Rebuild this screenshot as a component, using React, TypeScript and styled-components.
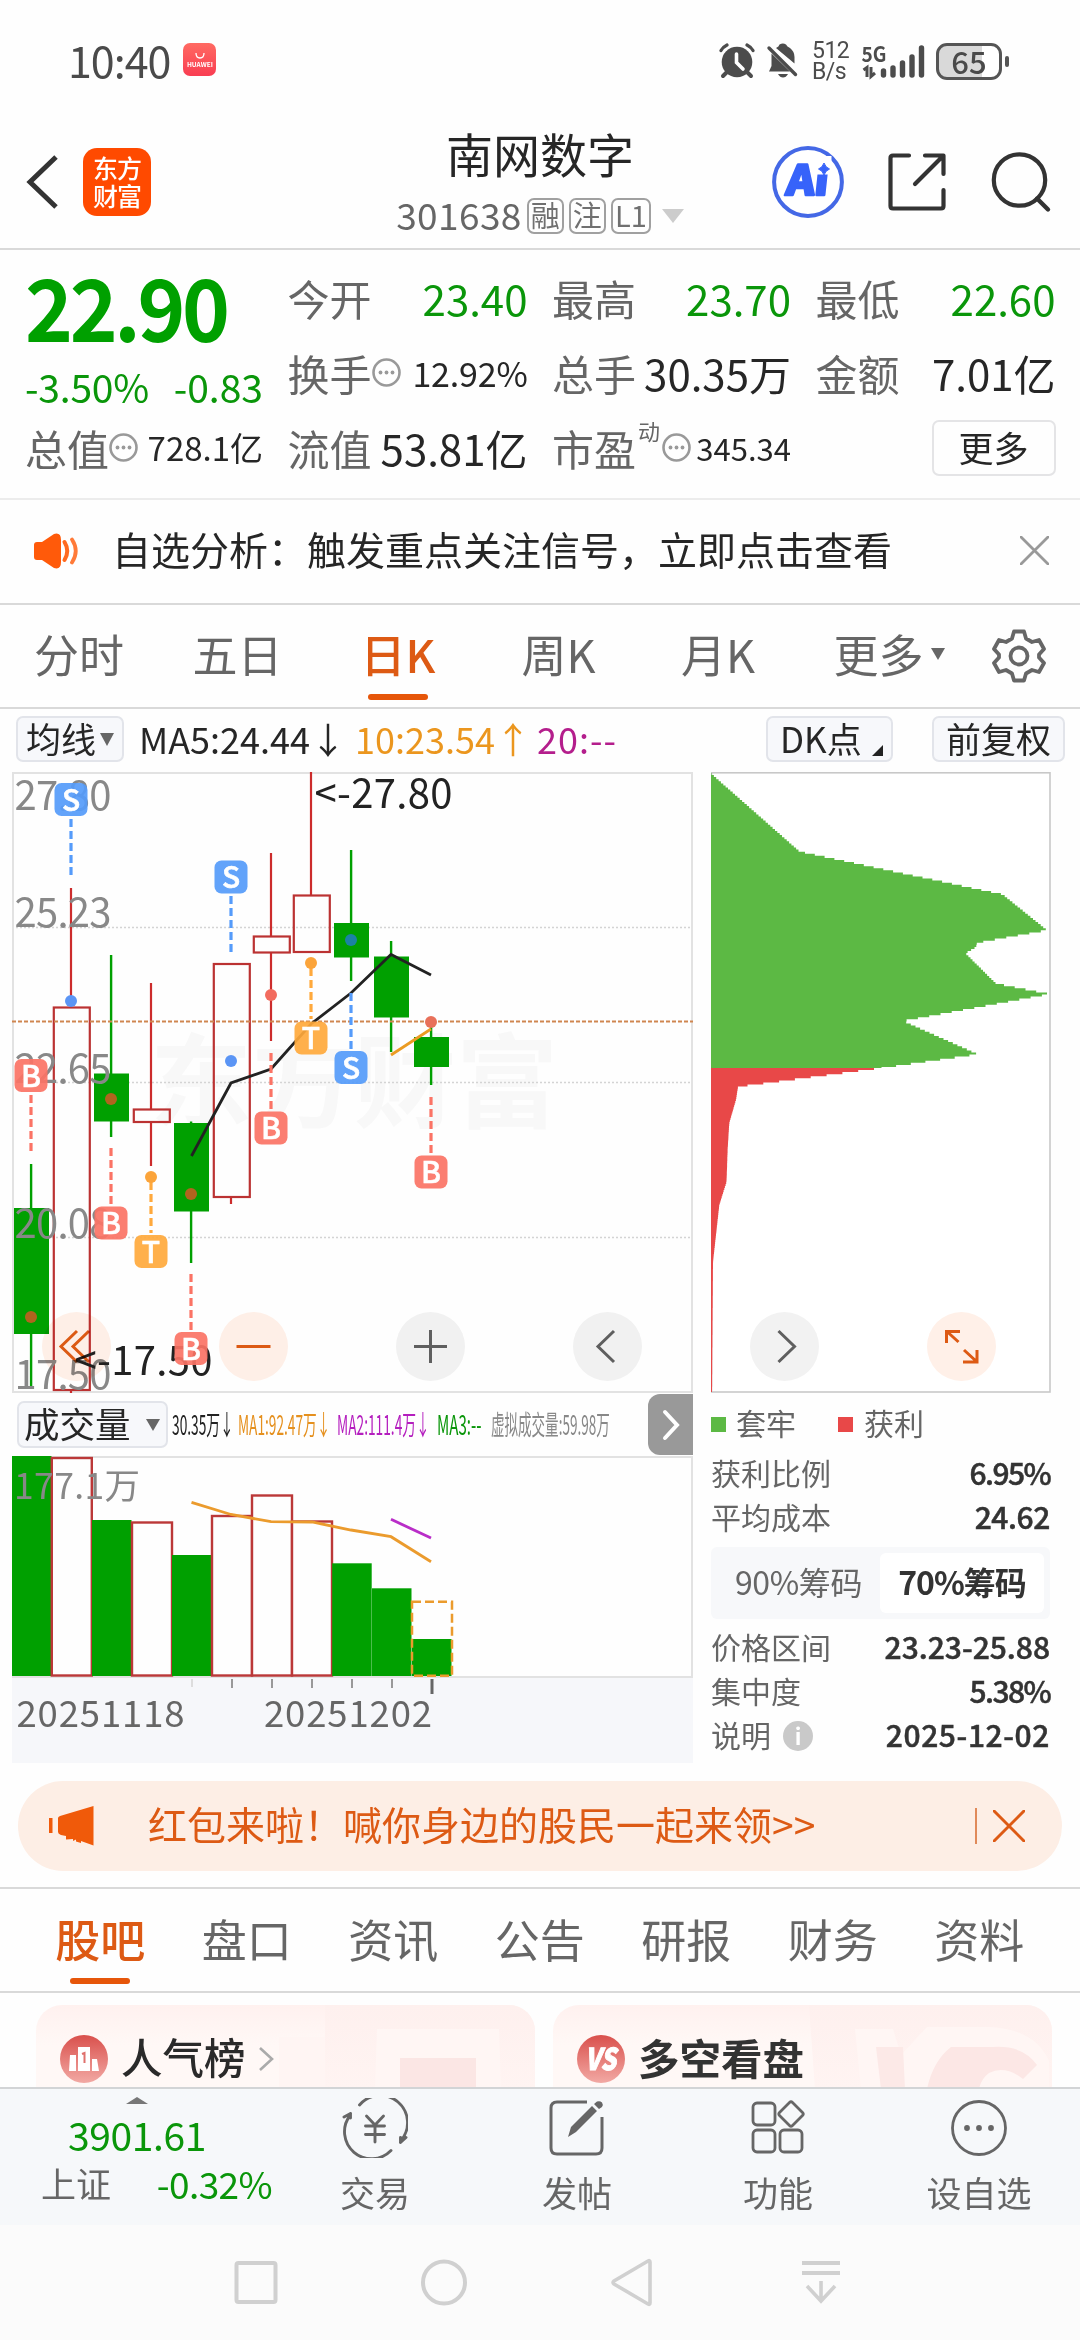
import React from "react";
import styled, { createGlobalStyle } from "styled-components";

const GREEN = "#0a960a";
const ORANGE = "#dd5a14";
const GRAY = "#666666";
const INK = "#262626";
const LINE = "#d9d9d9";
const FONT = `"Noto Sans CJK SC", "Noto Sans", sans-serif`;

const GlobalStyle = createGlobalStyle`
  * { box-sizing: border-box; }
  body { margin: 0; background: #fff; font-family: ${FONT}; }
  svg { display: block; flex: none; }
  svg text { font-family: ${FONT}; }
`;

const Screen = styled.div`
  width: 1080px;
  height: 2340px;
  overflow: hidden;
  display: flex;
  flex-direction: column;
  background: #fefefe;
  color: ${INK};
`;

const Txt = styled.span<{ s: number; c?: string; b?: number; ls?: number; ml?: number; pb?: number }>`
  font-size: ${(p) => p.s}px;
  line-height: 1;
  color: ${(p) => p.c ?? INK};
  font-weight: ${(p) => p.b ?? 400};
  letter-spacing: ${(p) => p.ls ?? 0}px;
  margin-left: ${(p) => p.ml ?? 0}px;
  padding-bottom: ${(p) => p.pb ?? 0}px;
  white-space: nowrap;
`;

/* ---------- status bar ---------- */
const StatusBar = styled.div`
  height: 118px;
  padding: 0 71px 0 68px;
  display: flex;
  align-items: center;
  justify-content: space-between;
`;
const Group = styled.div<{ gap?: number; pt?: number }>`
  display: flex;
  align-items: center;
  gap: ${(p) => p.gap ?? 0}px;
  padding-top: ${(p) => p.pt ?? 0}px;
`;
const StoreBadge = styled.div`
  width: 33px;
  height: 33px;
  border-radius: 7px;
  margin-left: 13px;
  background: linear-gradient(#ff6a62, #f93d52);
  display: flex;
  flex-direction: column;
  align-items: center;
  justify-content: center;
  color: #fff;
  font-size: 6.5px;
  font-weight: 700;
  line-height: 8px;
`;
const NetSpeed = styled.div`
  font-family: Roboto, sans-serif;
  font-size: 23px;
  line-height: 21px;
  color: #4c4c4c;
  width: 36px;
  white-space: nowrap;
  letter-spacing: -0.5px;
`;
const Battery = styled.div`
  width: 66px;
  height: 37px;
  border: 3px solid #555;
  border-radius: 11px;
  background: linear-gradient(90deg, #d9d9d9 43px, #fff 43px);
  display: flex;
  align-items: center;
  justify-content: center;
  padding-bottom: 2px;
`;
const BatteryTip = styled.div`
  width: 4px;
  height: 11px;
  margin-left: 3px;
  border-radius: 2px;
  background: #555;
`;

/* ---------- header ---------- */
const Header = styled.div`
  height: 132px;
  border-bottom: 2px solid ${LINE};
  display: grid;
  grid-template-columns: 340px 400px 340px;
`;
const HeadLeft = styled.div`
  display: flex;
  align-items: center;
  padding: 0 0 2px 25px;
  gap: 23px;
`;
const Logo = styled.div`
  width: 68px;
  height: 68px;
  border-radius: 14px;
  background: #ff4a00;
  color: #fff;
  display: flex;
  flex-direction: column;
  align-items: center;
  justify-content: center;
  font-size: 25px;
  line-height: 28px;
  font-weight: 500;
  letter-spacing: -1px;
  padding-bottom: 3px;
`;
const HeadMid = styled.div`
  display: flex;
  flex-direction: column;
  align-items: center;
  padding-top: 11px;
`;
const CodeRow = styled.div`
  display: flex;
  align-items: center;
  gap: 5px;
  margin-top: 20px;
`;
const Tag = styled.span<{ w: number }>`
  width: ${(p) => p.w}px;
  height: 36px;
  border: 2px solid #a0a0a0;
  border-radius: 7px;
  display: flex;
  align-items: center;
  justify-content: center;
  font-size: 29px;
  line-height: 1;
  color: #707070;
  padding-bottom: 3px;
`;
const HeadRight = styled.div`
  display: flex;
  align-items: center;
  padding: 0 0 3px 32px;
`;

/* ---------- quote ---------- */
const Quote = styled.div`
  height: 250px;
  border-bottom: 2px solid #ececec;
  padding: 10px 24px 0 25px;
  display: grid;
  grid-template-columns: 238px 240px 239px 240px;
  grid-template-rows: 75px 75px 75px;
  column-gap: 24.5px;
`;
const PriceBlock = styled.div`
  grid-row: span 2;
  display: flex;
  flex-direction: column;
`;
const BigPrice = styled.div`
  font-size: 86px;
  line-height: 1;
  font-weight: 700;
  letter-spacing: -3.5px;
  color: #00a000;
  margin-top: 2px;
  transform: scaleX(0.945);
  transform-origin: 0 50%;
`;
const ChangeRow = styled.div`
  display: flex;
  justify-content: space-between;
  margin-top: 19px;
`;
const Cell = styled.div<{ end?: boolean }>`
  display: flex;
  align-items: center;
  justify-content: ${(p) => (p.end ? "flex-end" : "space-between")};
  min-width: 0;
`;
const Sup = styled.sup`
  font-size: 22px;
  line-height: 1;
  color: ${GRAY};
  align-self: flex-start;
  margin: -8px 2px 0 2px;
`;
const MoreButton = styled.div`
  width: 124px;
  height: 56px;
  border: 2px solid #e4e4e6;
  border-radius: 7px;
  display: flex;
  align-items: center;
  justify-content: center;
  padding-bottom: 3px;
`;

/* ---------- notice ---------- */
const Notice = styled.div`
  height: 105px;
  border-bottom: 2px solid ${LINE};
  padding: 0 31px 2px 33px;
  display: grid;
  grid-template-columns: 79px 1fr 29px;
  align-items: center;
`;

/* ---------- tabs ---------- */
const PeriodTabs = styled.div`
  height: 104px;
  border-bottom: 2px solid ${LINE};
  display: grid;
  grid-template-columns: 158px 159px 162px 159px 160px 160px 122px;
`;
const Tab = styled.div<{ pt: number }>`
  display: flex;
  flex-direction: column;
  align-items: center;
  padding-top: ${(p) => p.pt}px;
`;
const Underline = styled.div<{ mt: number }>`
  width: 60px;
  height: 6px;
  border-radius: 3px;
  background: #e6560a;
  margin-top: ${(p) => p.mt}px;
`;
const Down = styled.i<{ w: number; h: number; c: string; ml?: number; mt?: number }>`
  width: 0;
  height: 0;
  border-left: ${(p) => p.w / 2}px solid transparent;
  border-right: ${(p) => p.w / 2}px solid transparent;
  border-top: ${(p) => p.h}px solid ${(p) => p.c};
  margin-left: ${(p) => p.ml ?? 0}px;
  margin-top: ${(p) => p.mt ?? 0}px;
`;
const Up = styled.i`
  width: 0;
  height: 0;
  border-left: 11px solid transparent;
  border-right: 11px solid transparent;
  border-bottom: 7px solid #777;
`;

/* ---------- chart ---------- */
const MaBar = styled.div`
  height: 63px;
  padding: 0 16px 3px;
  display: grid;
  grid-template-columns: 123px 216px 182px 229px 126px 40px 132px;
  align-items: center;
`;
const Chip = styled.div<{ w: number; h?: number }>`
  width: ${(p) => p.w}px;
  height: ${(p) => p.h ?? 46}px;
  background: #f7f8fb;
  border: 2px solid #e2e4ea;
  border-radius: 7px;
  display: flex;
  align-items: center;
  padding: 0 0 4px 8px;
`;
const Corner = styled.i`
  width: 0;
  height: 0;
  border-left: 11px solid transparent;
  border-bottom: 11px solid #222;
  margin: 27px 0 0 10px;
`;
const ChartArea = styled.div`
  position: relative;
  height: 993px;
  padding-left: 12px;
  display: grid;
  grid-template-columns: 681px 339px;
  column-gap: 18px;
`;
const Column = styled.div`
  display: flex;
  flex-direction: column;
`;
const Floating = styled.div`
  position: absolute;
  left: 42px;
  top: 540px;
  display: flex;
  gap: 108px;
  mix-blend-mode: multiply;
`;
const Round = styled.div<{ warm?: boolean }>`
  width: 69px;
  height: 69px;
  border-radius: 50%;
  background: ${(p) => (p.warm ? "#fff0e8" : "#f2f2f2")};
  display: flex;
  align-items: center;
  justify-content: center;
`;
const VolHeader = styled.div`
  height: 63px;
  display: flex;
  align-items: center;
  padding-left: 5px;
`;
const NarrowBox = styled.div<{ w: number }>`
  width: ${(p) => p.w}px;
  flex: none;
  padding-bottom: 3px;
`;
const Narrow = styled.span<{ c: string; k: number }>`
  display: inline-block;
  font-size: 27.5px;
  line-height: 32px;
  white-space: nowrap;
  color: ${(p) => p.c};
  transform: scaleX(${(p) => p.k});
  transform-origin: 0 50%;
`;
const Expand = styled.div`
  width: 45px;
  height: 61px;
  margin-left: auto;
  background: #999;
  border-radius: 12px 0 0 12px;
  display: flex;
  align-items: center;
  justify-content: center;
`;
const Axis = styled.div`
  height: 85px;
  background: #f6f7fa;
`;
const Legend = styled.div`
  display: grid;
  grid-template-columns: 25px 102px 26px 1fr;
  align-items: center;
  height: 57px;
`;
const Swatch = styled.i<{ c: string }>`
  width: 15px;
  height: 15px;
  margin-top: 5px;
  background: ${(p) => p.c};
`;
const StatRow = styled.div`
  height: 44px;
  display: flex;
  align-items: center;
  justify-content: space-between;
`;
const StatValue = styled.span<{ ls?: number }>`
  font-size: 30px;
  line-height: 1;
  font-weight: 500;
  color: #333;
  -webkit-text-stroke: 0.5px #333;
  letter-spacing: ${(p) => p.ls ?? 0}px;
`;
const Toggle = styled.div`
  height: 72px;
  margin: 9px 0 5px;
  background: #f7f8fa;
  border-radius: 6px;
  padding: 6px;
  display: grid;
  grid-template-columns: 163px 164px;
`;
const Option = styled.div<{ on?: boolean }>`
  background: ${(p) => (p.on ? "#fff" : "transparent")};
  border-radius: 6px;
  display: flex;
  align-items: center;
  justify-content: center;
  padding-bottom: 4px;
`;
const Info = styled.i`
  width: 30px;
  height: 30px;
  border-radius: 50%;
  background: #c9c9c9;
  margin-left: 12px;
  margin-top: 4px;
  color: #fff;
  font: 700 22px/29px ${FONT};
  text-align: center;
`;

/* ---------- banner and lower part ---------- */
const Banner = styled.div`
  height: 90px;
  margin: 16px 18px;
  border-radius: 45px;
  background: #fdeee5;
  display: grid;
  grid-template-columns: 130px 1fr 87px;
  align-items: center;
`;
const CloseBox = styled.div`
  height: 36px;
  border-left: 2px solid #e08a5a;
  padding-left: 16px;
  display: flex;
  align-items: center;
`;
const InfoTabs = styled.div`
  height: 106px;
  border-top: 2px solid ${LINE};
  border-bottom: 2px solid ${LINE};
  padding: 0 27px;
  display: grid;
  grid-template-columns: repeat(7, 146.5px);
`;
const Cards = styled.div`
  height: 94px;
  padding: 12px 28px 0 36px;
  display: grid;
  grid-template-columns: 499px 499px;
  column-gap: 18px;
  overflow: hidden;
`;
const Card = styled.div`
  height: 150px;
  border-radius: 26px;
  overflow: hidden;
  background: linear-gradient(180deg, #fff1ef, #fff8f6 40px);
  display: grid;
  grid-template-columns: 1fr auto;
`;
const CardTitle = styled.div`
  display: flex;
  align-items: center;
  height: 108px;
  padding-left: 24px;
`;
const BottomBar = styled.div`
  height: 138px;
  border-top: 2px solid #d2d4d6;
  background: #f6f8fa;
  display: grid;
  grid-template-columns: 274px 202px 202px 200px 202px;
`;
const IndexBox = styled.div`
  display: flex;
  flex-direction: column;
  align-items: center;
  gap: 11px;
  padding-top: 8px;
`;
const IndexRow = styled.div`
  width: 232px;
  margin-left: 40px;
  display: flex;
  justify-content: space-between;
  align-self: flex-start;
`;
const Action = styled.div`
  display: flex;
  flex-direction: column;
  align-items: center;
  padding-top: 9px;
  gap: 16px;
`;
const NavBar = styled.div`
  flex: 1;
  background: #fbfbfb;
  display: flex;
  padding: 30px 0 0 233px;
  gap: 142px;
`;

/* ---------- icons ---------- */
const Dots = () => (
  <svg width="29" height="29" viewBox="0 0 29 29">
    <circle cx="14.5" cy="14.5" r="13" fill="none" stroke="#999" strokeWidth="2.6" />
    <circle cx="8.5" cy="14.5" r="1.9" fill="#999" />
    <circle cx="14.5" cy="14.5" r="1.9" fill="#999" />
    <circle cx="20.5" cy="14.5" r="1.9" fill="#999" />
  </svg>
);
const Cross = ({ s, c, w }: { s: number; c: string; w: number }) => (
  <svg width={s} height={s} viewBox={`0 0 ${s} ${s}`}>
    <path d={`M1 1L${s - 1} ${s - 1}M${s - 1} 1L1 ${s - 1}`} stroke={c} strokeWidth={w} strokeLinecap="round" />
  </svg>
);
const AlarmBell = styled.svg`
  margin-right: 13px;
`;
const StatusIcons = () => (
  <AlarmBell width="80" height="36" viewBox="0 0 80 36">
    <g fill="#4c4c4c">
      <circle cx="18" cy="19" r="15.3" />
      <path d="M8 29L4 33M28 29L32 33" stroke="#4c4c4c" strokeWidth="4" strokeLinecap="round" />
      <path d="M2 7.5Q4 4 8 2M34 7.500Q32 4 28 2" stroke="#4c4c4c" strokeWidth="3.200" fill="none" strokeLinecap="round" />
      <path d="M17.500 11V19.500L24 26" stroke="#fff" strokeWidth="3.600" fill="none" strokeLinecap="round" />
      <path d="M57 5Q60 3.500 60.500 1.500Q64 -0.500 67 1.500Q68 3.500 71 5Q75.500 8.500 75.500 14V20.500Z" />
      <path d="M52.500 10.500L71 28.500H50L52.500 23Z" />
      <path d="M50 5L76.500 31.500" stroke="#4c4c4c" strokeWidth="3.400" strokeLinecap="round" />
      <path d="M59 31H69Q67 34.500 64 34.500Q61 34.500 59 31Z" />
    </g>
  </AlarmBell>
);
const SignalSvg = styled.svg`
  margin: 0 10px 0 14px;
`;
const Signal = () => (
  <SignalSvg width="64" height="38" viewBox="0 0 64 38">
    <text x="-0.500" y="19.500" fontSize="21" fontWeight="700" fill="#4c4c4c" textLength="25" lengthAdjust="spacingAndGlyphs">5G</text>
    <path d="M1.500 28L5 25.500V35M9 25V34.500L13 31" stroke="#4c4c4c" strokeWidth="3" fill="none" />
    <path d="M21.500 29V33M31 26V33M40.500 21V33M50 15V33M59.500 6V33" stroke="#4c4c4c" strokeWidth="5.400" strokeLinecap="round" />
  </SignalSvg>
);
const AiIcon = () => (
  <svg width="72" height="72" viewBox="0 0 72 72">
    <circle cx="36" cy="36" r="33.900" fill="#fff" stroke="#4468e6" strokeWidth="4" />
    <g transform="translate(4.500 0) skewX(-6)">
      <text x="14" y="49.500" fontSize="41" fontWeight="900" fill="#3763fa" stroke="#3763fa" strokeWidth="2.400" strokeLinejoin="round" textLength="42" lengthAdjust="spacingAndGlyphs">Ai</text>
    </g>
    <rect x="43.500" y="10" width="16" height="18.500" fill="#fff" />
    <path d="M52 17Q53.500 21.500 57.500 23Q53.500 24.500 52 29Q50.500 24.500 46.500 23Q50.500 21.500 52 17Z" fill="#3763fa" stroke="#3763fa" />
  </svg>
);
const ShareSvg = styled.svg`
  margin: 0 45px 0 44px;
`;
const ShareIcon = () => (
  <ShareSvg width="58" height="58" viewBox="0 0 58 58">
    <g fill="none" stroke="#333" strokeWidth="4.200" strokeLinecap="round" strokeLinejoin="round">
      <path d="M21 2.500H5Q2.500 2.500 2.500 5V53Q2.500 55.500 5 55.500H53Q55.500 55.500 55.500 53V37" />
      <path d="M37 2.500H55.500V21M54 4L27 31" />
    </g>
  </ShareSvg>
);
const SearchIcon = () => (
  <svg width="62" height="62" viewBox="0 0 62 62">
    <circle cx="28.500" cy="29" r="25.700" fill="none" stroke="#333" strokeWidth="4.200" />
    <path d="M46 47.500L57 58.500" stroke="#333" strokeWidth="4.400" strokeLinecap="round" />
  </svg>
);
const Speaker = () => (
  <svg width="46" height="38" viewBox="0 0 46 38">
    <path d="M1 13Q1 10 4 10H9L21 2Q28 0 28 8V30Q28 38 21 36L9 28H4Q1 28 1 25Z" fill="#ff5a0a" />
    <path d="M31.500 10Q37 19 31.500 28" stroke="#ff6a20" strokeWidth="4" fill="none" strokeLinecap="round" />
    <path d="M39 7.500Q46.500 19 39 30.500" stroke="#ff7a38" strokeWidth="3.800" fill="none" strokeLinecap="round" />
  </svg>
);
const Gear = () => (
  <svg width="54" height="54" viewBox="0 0 54 54">
    <path
      d="M22 2.500H32L34 9.500L40 13L47 11L52 20L47 25.500V28.500L52 34L47 43L40 41L34 44.500L32 51.500H22L20 44.500L14 41L7 43L2 34L7 28.500V25.500L2 20L7 11L14 13L20 9.500Z"
      fill="none" stroke={GRAY} strokeWidth="3.800" strokeLinejoin="round"
    />
    <circle cx="27" cy="27" r="8.500" fill="none" stroke={GRAY} strokeWidth="3.800" />
  </svg>
);
const HornSvg = styled.svg`
  margin-left: 29px;
`;
const Horn = () => (
  <HornSvg width="48" height="42" viewBox="-1 0 48 42">
    <path d="M1 13H4.500V28H1ZM10 13Q10 12 12 11L45.500 1V40.500L33 36V38L28 36.500V34.500L25 36V34L18 34.500V31L13 30Q10 29 10 27Z" fill="#f05a0a" />
  </HornSvg>
);
const RankIcon = () => (
  <svg width="48" height="48" viewBox="0 0 48 48">
    <defs>
      <linearGradient id="ball" x1="0" y1="0" x2="0" y2="1">
        <stop offset="0" stopColor="#d9504c" />
        <stop offset="1" stopColor="#f2a9a4" />
      </linearGradient>
    </defs>
    <circle cx="24" cy="24" r="24" fill="url(#ball)" />
    <path d="M10 20H16V36H9ZM18 12H30V36H18ZM32 24H37L39 36H32Z" fill="#fff" />
    <path d="M22 19L24.500 18V28" stroke="#e0706c" strokeWidth="2" fill="none" />
  </svg>
);
const VsIcon = () => (
  <svg width="48" height="48" viewBox="0 0 48 48">
    <circle cx="24" cy="24" r="24" fill="url(#ball)" />
    <text x="8" y="35" fontSize="30" fontWeight="900" fontStyle="italic" fill="#fff" stroke="#fff" textLength="31" lengthAdjust="spacingAndGlyphs">VS</text>
  </svg>
);
const Chevron = styled.svg`
  margin-left: 12px;
`;
const Podium = () => (
  <svg width="258" height="84" viewBox="0 0 258 84">
    <defs>
      <linearGradient id="pod" x1="0" y1="0" x2="0" y2="1">
        <stop offset="0" stopColor="#fef0ee" />
        <stop offset="1" stopColor="#fff4f2" />
      </linearGradient>
    </defs>
    <path d="M2 32H48V84H2Z" fill="#fff5f3" />
    <path d="M48 0H258V84H48Z" fill="url(#pod)" />
    <path d="M100 24H222L224 84H98Z" fill="#fff6f4" />
    <path d="M123 53H199V84H123Z" fill="#fbe6e4" />
  </svg>
);
const VsArt = () => (
  <svg width="243" height="84" viewBox="0 0 243 84">
    <path d="M0 0H243V84H6Z" fill="url(#pod)" />
    <path d="M46 24H84L92 50L118 22H180Q226 24 240 56V84H52Z" fill="#fff6f4" />
    <path d="M67 42H94L96 84H72Z" fill="#fce9e7" />
    <path d="M142 42H184Q214 40 228 60L214 74Q196 60 180 68Q172 74 170 84H118Q124 56 142 42Z" fill="#fce7e5" />
  </svg>
);

const TradeIcon = () => (
  <svg width="66" height="60" viewBox="0 0 66 60">
    <g fill="none" stroke={GRAY} strokeWidth="2.900" strokeLinecap="round" strokeLinejoin="round">
      <path d="M17.500 7A27 27 0 0 1 59 42.500M58.500 44.500V39.500M58.500 44.500L64 39.500" />
      <path d="M49 52.500A27 27 0 0 1 8 17.500M8.500 15.500V20M8.500 15.500L2 19" />
      <path d="M24.500 18L33 27L41.500 18M33 27V44M23.500 28H42.500M23.500 36.500H42.500" />
    </g>
  </svg>
);
const PostIcon = () => (
  <svg width="56" height="60" viewBox="0 0 56 60">
    <path d="M38 4H8Q2 4 2 10V50Q2 56 8 56H47Q53 56 53 50V19" fill="none" stroke={GRAY} strokeWidth="3" />
    <path d="M19 39L22 29L43 8L48 13L27 34ZM45 6L48 3.500Q51 2.500 53 4.500Q54.500 6.500 53 9L50 11Z" fill={GRAY} />
  </svg>
);
const GridIcon = () => (
  <svg width="54" height="60" viewBox="0 0 54 60">
    <g fill="none" stroke={GRAY} strokeWidth="2.800">
      <rect x="2" y="5" width="22" height="22" rx="4" />
      <rect x="2" y="32" width="22" height="22" rx="4" />
      <rect x="29" y="32" width="22" height="22" rx="4" />
      <path d="M38.500 4.500Q40 3 41.500 4.500L51.500 14.500Q53 16 51.500 17.500L41.500 27.500Q40 29 38.500 27.500L28.500 17.500Q27 16 28.500 14.500Z" />
    </g>
  </svg>
);
const SelectIcon = () => (
  <svg width="58" height="60" viewBox="0 0 58 60">
    <circle cx="29" cy="30" r="26.500" fill="none" stroke={GRAY} strokeWidth="2.800" />
    {[17, 29, 41].map((x) => (
      <circle key={x} cx={x} cy="30" r="2.900" fill={GRAY} />
    ))}
  </svg>
);

/* ---------- charts ---------- */
type Candle = { x: number; up: boolean; o: number; c: number; h: number; l: number };
const candles: Candle[] = [
  { x: 31, up: false, o: 1208, c: 1334, h: 1164, l: 1388 },
  { x: 71, up: true, o: 1007.5, c: 1390, h: 888, l: 1393 },
  { x: 111, up: false, o: 1073.5, c: 1121.5, h: 955, l: 1137 },
  { x: 151, up: true, o: 1109.5, c: 1122, h: 983, l: 1166 },
  { x: 191, up: false, o: 1123, c: 1211.5, h: 1121.5, l: 1263 },
  { x: 231, up: true, o: 964, c: 1197, h: 964, l: 1204 },
  { x: 271, up: true, o: 936.5, c: 952.5, h: 853, l: 1041 },
  { x: 311, up: true, o: 895.5, c: 952, h: 772, l: 952 },
  { x: 351, up: false, o: 923, c: 957.5, h: 850, l: 981 },
  { x: 391, up: false, o: 956.5, c: 1017.5, h: 941, l: 1052 },
  { x: 431, up: false, o: 1037, c: 1067, h: 1021, l: 1085 },
];
const marks: [number, number, string, number, number, number, string][] = [
  [31, 1075.5, "B", 1095, 1151, 1317, "#b0641e"],
  [71, 799.5, "S", 819, 875, 1001, "#5b95f5"],
  [111, 1223, "B", 1148, 1204, 1099, "#b0641e"],
  [151, 1251.5, "T", 1182, 1233, 1177, "#fba43a"],
  [191, 1348.5, "B", 1274, 1330, 1194, "#b0641e"],
  [231, 877, "S", 896, 952, 1061, "#5b95f5"],
  [271, 1128, "B", 1053, 1109, 995, "#f26b5e"],
  [311, 1038, "T", 968, 1019, 963, "#fba43a"],
  [351, 1067.5, "S", 993, 1049, 940, "#1b82a4"],
  [431, 1172, "B", 1097, 1153, 1022, "#e8705a"],
];
const markColor: Record<string, string> = { B: "#fb7365", S: "#559bfa", T: "#ffa93c" };
const priceLabels: [number, string][] = [
  [809.5, "27.80"], [927, "25.23"], [1083, "22.65"], [1238, "20.08"], [1389, "17.50"],
];

const KLine = () => (
  <svg width="681" height="621" viewBox="12 772 681 621">
    <text x="150" y="1120" fontSize="102" fontWeight="700" fill="#f8f8f8">东方财富</text>
    <path d="M12 927.5H693M12 1082.5H693M12 1237.5H693" stroke="#d4d4d4" strokeWidth="1.5" strokeDasharray="2 2" />
    <rect x="13" y="773" width="679" height="619" fill="none" stroke="#e2e2e2" strokeWidth="2" />
    {candles.map((k) =>
      k.up ? (
        <g key={k.x} stroke="#bb3232" strokeWidth="2.2" fill="none">
          <path d={`M${k.x} ${k.h}V${k.o}M${k.x} ${k.c}V${k.l}`} stroke="#cc2c2c" />
          <rect x={k.x - 17.2} y={k.o} width="36" height={k.c - k.o} />
        </g>
      ) : (
        <g key={k.x} fill="#00a000">
          <rect x={k.x - 1.1} y={k.h} width="2.4" height={k.l - k.h} />
          <rect x={k.x - 17} y={k.o} width="35" height={k.c - k.o} />
        </g>
      )
    )}
    <path d="M12 1021.5H693" stroke="#cf8650" strokeWidth="1.8" strokeDasharray="4 2" />
    <path d="M191.500 1156L231 1083L271 1069L311 1024L351 993L391 954.500L431 975" fill="none" stroke="#222" strokeWidth="2.8" />
    <path d="M391 1055L431 1029" fill="none" stroke="#eb9b22" strokeWidth="2.8" />
    <g fontSize="40" fill="#888888">
      {priceLabels.map(([y, t]) => (
        <text key={t} x="14.5" y={y} textLength="97">{t}</text>
      ))}
    </g>
    <g fontSize="40" fill="#222">
      <text x="314.5" y="808" textLength="138">&lt;-27.80</text>
      <text x="74.5" y="1375" textLength="138">&lt;-17.50</text>
    </g>
    {marks.map(([x, y, t, a, b, dot, dc]) => (
      <g key={x}>
        <path d={`M${x} ${a}V${b}`} stroke={markColor[t]} strokeWidth="3.2" strokeDasharray="8 4" />
        <circle cx={x} cy={dot} r="6" fill={dc} />
        <rect x={x - 16.5} y={y - 16.5} width="33" height="33" rx="7" fill={markColor[t]} opacity="0.92" />
        <text x={x} y={y + 11} fontSize="30" fontWeight="500" fill="#fff" stroke="#fff" strokeWidth="0.6" textAnchor="middle">{t}</text>
      </g>
    ))}
  </svg>
);

const lossEdge: [number, number][] = [
  [773, 711.5], [850.5, 799.5], [893.4, 1002.5], [929.2, 1047], [941.8, 977], [946, 976], [952.3, 965.5],
  [982.6, 996], [993, 1050], [1020, 903], [1053.3, 978], [1068, 874],
];
const gainEdge: [number, number][] = [
  [1068, 874], [1085.8, 738], [1098.8, 736], [1122, 729.3], [1147, 727.7], [1181, 726.5], [1204, 719.3], [1261, 713], [1392, 712],
];
const stairs = (edge: [number, number][]) => {
  const top = edge[0][0];
  const end = edge[edge.length - 1][0];
  let d = `M711 ${top}`;
  for (let y = top; y < end; y += 2.07) {
    const i = Math.max(0, edge.findIndex((p) => p[0] > y) - 1);
    const [y0, x0] = edge[i];
    const [y1, x1] = edge[i + 1];
    const x = x0 + ((x1 - x0) * (y - y0)) / (y1 - y0);
    d += `L${x.toFixed(1)} ${y.toFixed(1)}L${x.toFixed(1)} ${Math.min(end, y + 2.07).toFixed(1)}`;
  }
  return `${d}L711 ${end}Z`;
};
const ChipChart = () => (
  <svg width="340" height="621" viewBox="711 772 340 621">
    <rect x="711.5" y="772.8" width="338.500" height="619.2" fill="#fff" stroke="#c8c8c8" strokeWidth="1.6" />
    <path d={stairs(lossEdge)} fill="#5cb944" />
    <path d={stairs(gainEdge)} fill="#e84848" />
  </svg>
);

const bars: [number, number, boolean][] = [
  [12, 1456, false], [51.8, 1458, true], [92, 1520, false], [132, 1522.5, true], [172, 1555, false],
  [212, 1516, true], [252, 1495.5, true], [292, 1521.5, true], [332.2, 1563.3, false], [372, 1588.3, false], [412, 1639, false],
];
const Volume = () => (
  <svg width="681" height="222" viewBox="12 1456 681 222">
    <path d="M12 1457H692V1677H12Z" fill="none" stroke="#e2e2e2" strokeWidth="2" />
    {bars.map(([x, y, up]) =>
      up ? (
        <rect key={x} x={x} y={y} width="40" height={1675.5 - y} fill="#fefefe" stroke="#bb3838" strokeWidth="2.4" />
      ) : (
        <rect key={x} x={x} y={y} width="39.5" height={1676 - y} fill="#00a000" />
      )
    )}
    <rect x="412" y="1601.7" width="40" height="74" fill="none" stroke="#eb9b2d" strokeWidth="2.5" strokeDasharray="9 4" />
    <path d="M191.500 1502.300L231 1514.500L271 1521.700L312 1522L351 1530L391 1536.700L431 1561.700" fill="none" stroke="#eb9b2d" strokeWidth="2.8" />
    <path d="M391 1519.300L431 1538" stroke="#b92dc8" strokeWidth="2.8" />
    <text x="14" y="1499" fontSize="35.5" fill="#888" textLength="126">177.1万</text>
  </svg>
);
const AxisDrawing = () => (
  <svg width="681" height="85" viewBox="12 1678 681 85">
    <path d="M192 1679V1687" stroke="#ddd" strokeWidth="2" />
    <path d="M232 1679V1688M272 1679V1688M312 1679V1688M352 1679V1688M392 1679V1688" stroke="#999" strokeWidth="2" />
    <path d="M432 1679V1694" stroke="#666" strokeWidth="3" />
    <text x="16.5" y="1727" fontSize="36.5" fill="#666" textLength="168">20251118</text>
    <text x="264" y="1727" fontSize="36.5" fill="#666" textLength="168">20251202</text>
  </svg>
);
const floatPaths: [string, boolean][] = [
  ["M35 19L19 34.500L35 50M47 19L31 34.500L47 50", true],
  ["M17.500 34.500H51.500", true],
  ["M18 34.500H51M34.500 18V51", false],
  ["M41 19L25 34.500L41 50", false],
  ["M28.500 19L44.500 34.500L28.500 50", false],
  ["M19.500 31V19.500H33M20.500 20L31.500 30M37 38L49 49M36 50H50V38", true],
];
const periods = ["分时", "五日", "日K", "周K", "月K"];
const sections = ["股吧", "盘口", "资讯", "公告", "研报", "财务", "资料"];

export default function App() {
  return (
    <Screen>
      <GlobalStyle />
      <StatusBar>
        <Group pt={1}>
          <Txt s={43} c="#4a4a4a" ls={-1}>10:40</Txt>
          <StoreBadge>
            <svg width="10" height="8" viewBox="0 0 10 8"><path d="M1 1Q1 6 5 6Q9 6 9 1" stroke="#fff" strokeWidth="1.3" fill="none" /></svg>
            HUAWEI
          </StoreBadge>
        </Group>
        <Group pt={4}>
          <StatusIcons />
          <NetSpeed>512<br />B/s</NetSpeed>
          <Signal />
          <Battery><Txt s={31} c="#4a4a4a" b={500}>65</Txt></Battery>
          <BatteryTip />
        </Group>
      </StatusBar>

      <Header>
        <HeadLeft>
          <svg width="35" height="56" viewBox="0 0 35 56"><path d="M31 3L5 28L31 53" fill="none" stroke="#333" strokeWidth="5" /></svg>
          <Logo><span>东方</span><span>财富</span></Logo>
        </HeadLeft>
        <HeadMid>
          <Txt s={47}>南网数字</Txt>
          <CodeRow>
            <Txt s={37} c={GRAY} ls={0.4} pb={3}>301638</Txt>
            <Tag w={37}>融</Tag>
            <Tag w={37}>注</Tag>
            <Tag w={40}>L1</Tag>
            <Down w={22} h={14} c="#ccc" ml={6} />
          </CodeRow>
        </HeadMid>
        <HeadRight><AiIcon /><ShareIcon /><SearchIcon /></HeadRight>
      </Header>

      <Quote>
        <PriceBlock>
          <BigPrice>22.90</BigPrice>
          <ChangeRow>
            <Txt s={39} c={GREEN} ls={-0.2}>-3.50%</Txt>
            <Txt s={39} c={GREEN}>-0.83</Txt>
          </ChangeRow>
        </PriceBlock>
        <Cell><Txt s={42} c={GRAY}>今开</Txt><Txt s={42} c={GREEN}>23.40</Txt></Cell>
        <Cell><Txt s={42} c={GRAY}>最高</Txt><Txt s={42} c={GREEN}>23.70</Txt></Cell>
        <Cell><Txt s={42} c={GRAY}>最低</Txt><Txt s={42} c={GREEN}>22.60</Txt></Cell>
        <Cell><Group><Txt s={42} c={GRAY}>换手</Txt><Dots /></Group><Txt s={34} ls={-0.2}>12.92%</Txt></Cell>
        <Cell><Txt s={42} c={GRAY}>总手</Txt><Txt s={42}>30.35万</Txt></Cell>
        <Cell><Txt s={42} c={GRAY}>金额</Txt><Txt s={42}>7.01亿</Txt></Cell>
        <Cell><Group><Txt s={42} c={GRAY}>总值</Txt><Dots /></Group><Txt s={33}>728.1亿</Txt></Cell>
        <Cell><Txt s={42} c={GRAY}>流值</Txt><Txt s={42}>53.81亿</Txt></Cell>
        <Cell><Group><Txt s={42} c={GRAY}>市盈</Txt><Sup>动</Sup><Dots /></Group><Txt s={31}>345.34</Txt></Cell>
        <Cell end><MoreButton><Txt s={35}>更多</Txt></MoreButton></Cell>
      </Quote>

      <Notice>
        <Speaker />
        <Txt s={39} pb={4}>自选分析：触发重点关注信号，立即点击查看</Txt>
        <Cross s={29} c="#999" w={2.8} />
      </Notice>

      <PeriodTabs>
        {periods.map((p) => (
          <Tab key={p} pt={26}>
            <Txt s={45} c={p === "日K" ? ORANGE : GRAY} b={p === "日K" ? 500 : 400}>{p}</Txt>
            {p === "日K" && <Underline mt={18} />}
          </Tab>
        ))}
        <Tab pt={26}>
          <Group><Txt s={45} c={GRAY} ml={22}>更多</Txt><Down w={15} h={12} c={GRAY} ml={7} /></Group>
        </Tab>
        <Tab pt={24}><Gear /></Tab>
      </PeriodTabs>

      <MaBar>
        <Chip w={108}><Txt s={35}>均线</Txt><Down w={15} h={13} c={GRAY} ml={4} mt={4} /></Chip>
        <Txt s={36} pb={3}>MA5:24.44↓</Txt>
        <Txt s={36} pb={3} c="#eb961e">10:23.54↑</Txt>
        <Txt s={36} pb={3} ls={1} c="#b41e8c">20:--</Txt>
        <Chip w={127}><Txt s={35} ml={4}>DK点</Txt><Corner /></Chip>
        <i />
        <Chip w={133}><Txt s={35} ml={4}>前复权</Txt></Chip>
      </MaBar>

      <ChartArea>
        <Column>
          <KLine />
          <VolHeader>
            <Chip w={151} h={47}><Txt s={35.5} ml={-3}>成交量</Txt><Down w={15} h={12} c={GRAY} ml={15} mt={4} /></Chip>
            <NarrowBox w={4} />
            <NarrowBox w={66}><Narrow c="#222" k={0.5}>30.35万↓</Narrow></NarrowBox>
            <NarrowBox w={99}><Narrow c="#e5901e" k={0.498}>MA1:92.47万↓</Narrow></NarrowBox>
            <NarrowBox w={100}><Narrow c="#b41ebe" k={0.5}>MA2:111.4万↓</Narrow></NarrowBox>
            <NarrowBox w={54}><Narrow c={GREEN} k={0.55}>MA3:--</Narrow></NarrowBox>
            <NarrowBox w={124}><Narrow c="#888" k={0.492}>虚拟成交量:59.98万</Narrow></NarrowBox>
            <Expand>
              <svg width="20" height="32" viewBox="0 0 20 32"><path d="M4 3L16 16L4 29" stroke="#fff" strokeWidth="4" fill="none" strokeLinecap="round" /></svg>
            </Expand>
          </VolHeader>
          <Volume />
          <Axis><AxisDrawing /></Axis>
        </Column>
        <Column>
          <ChipChart />
          <Legend>
            <Swatch c="#5cb944" /><Txt s={30} c={GRAY}>套牢</Txt>
            <Swatch c="#e84848" /><Txt s={30} c={GRAY}>获利</Txt>
          </Legend>
          <StatRow><Txt s={30} c={GRAY}>获利比例</Txt><StatValue ls={-1.6}>6.95%</StatValue></StatRow>
          <StatRow><Txt s={30} c={GRAY}>平均成本</Txt><StatValue ls={-0.4}>24.62</StatValue></StatRow>
          <Toggle>
            <Option><Txt s={32} c={GRAY} ls={-0.4}>90%筹码</Txt></Option>
            <Option on><Txt s={32} b={700} c="#333" ls={-1}>70%筹码</Txt></Option>
          </Toggle>
          <StatRow><Txt s={30} c={GRAY}>价格区间</Txt><StatValue>23.23-25.88</StatValue></StatRow>
          <StatRow><Txt s={30} c={GRAY}>集中度</Txt><StatValue ls={-1.6}>5.38%</StatValue></StatRow>
          <StatRow><Group><Txt s={30} c={GRAY}>说明</Txt><Info>i</Info></Group><StatValue ls={0.6}>2025-12-02</StatValue></StatRow>
        </Column>
        <Floating>
          {floatPaths.map(([d, warm]) => (
            <Round key={d} warm={warm}>
              <svg width="69" height="69" viewBox="0 0 69 69"><path d={d} fill="none" stroke={warm ? ORANGE : "#5f5f5f"} strokeWidth="3" /></svg>
            </Round>
          ))}
        </Floating>
      </ChartArea>

      <Banner>
        <Horn />
        <Txt s={39} c={ORANGE} pb={6}>红包来啦！喊你身边的股民一起来领&gt;&gt;</Txt>
        <CloseBox><Cross s={32} c={ORANGE} w={3} /></CloseBox>
      </Banner>

      <InfoTabs>
        {sections.map((p, i) => (
          <Tab key={p} pt={27}>
            <Txt s={45} c={i === 0 ? ORANGE : GRAY} b={i === 0 ? 500 : 400}>{p}</Txt>
            {i === 0 && <Underline mt={17} />}
          </Tab>
        ))}
      </InfoTabs>

      <Cards>
        <Card>
          <CardTitle>
            <RankIcon />
            <Txt s={41.5} b={500} c="#2a2a2a" ml={13} pb={4}>人气榜</Txt>
            <Chevron width="17" height="26" viewBox="0 0 17 26"><path d="M2 2L14 13L2 24" fill="none" stroke="#aaa" strokeWidth="2.6" /></Chevron>
          </CardTitle>
          <Podium />
        </Card>
        <Card>
          <CardTitle>
            <VsIcon />
            <Txt s={41.5} b={700} c="#333" ml={13} pb={3}>多空看盘</Txt>
          </CardTitle>
          <VsArt />
        </Card>
      </Cards>

      <BottomBar>
        <IndexBox>
          <Up />
          <Txt s={39} c={GREEN} ls={-0.4}>3901.61</Txt>
          <IndexRow><Txt s={35} c={GRAY} ml={1}>上证</Txt><Txt s={37} c={GREEN} ls={-0.6}>-0.32%</Txt></IndexRow>
        </IndexBox>
        <Action><TradeIcon /><Txt s={35} c={GRAY}>交易</Txt></Action>
        <Action><PostIcon /><Txt s={35} c={GRAY}>发帖</Txt></Action>
        <Action><GridIcon /><Txt s={35} c={GRAY}>功能</Txt></Action>
        <Action><SelectIcon /><Txt s={35} c={GRAY}>设自选</Txt></Action>
      </BottomBar>

      <NavBar>
        <svg width="46" height="54" viewBox="0 0 46 54"><rect x="3.5" y="8" width="39" height="39" rx="2" fill="none" stroke="#d0d0d0" strokeWidth="4" /></svg>
        <svg width="46" height="54" viewBox="0 0 46 54"><circle cx="23" cy="27.5" r="21" fill="none" stroke="#d0d0d0" strokeWidth="4" /></svg>
        <svg width="46" height="54" viewBox="0 0 46 54"><path d="M41 7Q41 5 39 6L5 26Q3 27.5 5 29L39 49Q41 50 41 48Z" fill="none" stroke="#d0d0d0" strokeWidth="3.6" /></svg>
        <svg width="46" height="54" viewBox="0 0 46 54"><path d="M5 8H43M5 18H43" stroke="#d0d0d0" strokeWidth="4" /><path d="M24 26V46M10 31L24 46L38 31" fill="none" stroke="#d0d0d0" strokeWidth="3.6" /></svg>
      </NavBar>
    </Screen>
  );
}
